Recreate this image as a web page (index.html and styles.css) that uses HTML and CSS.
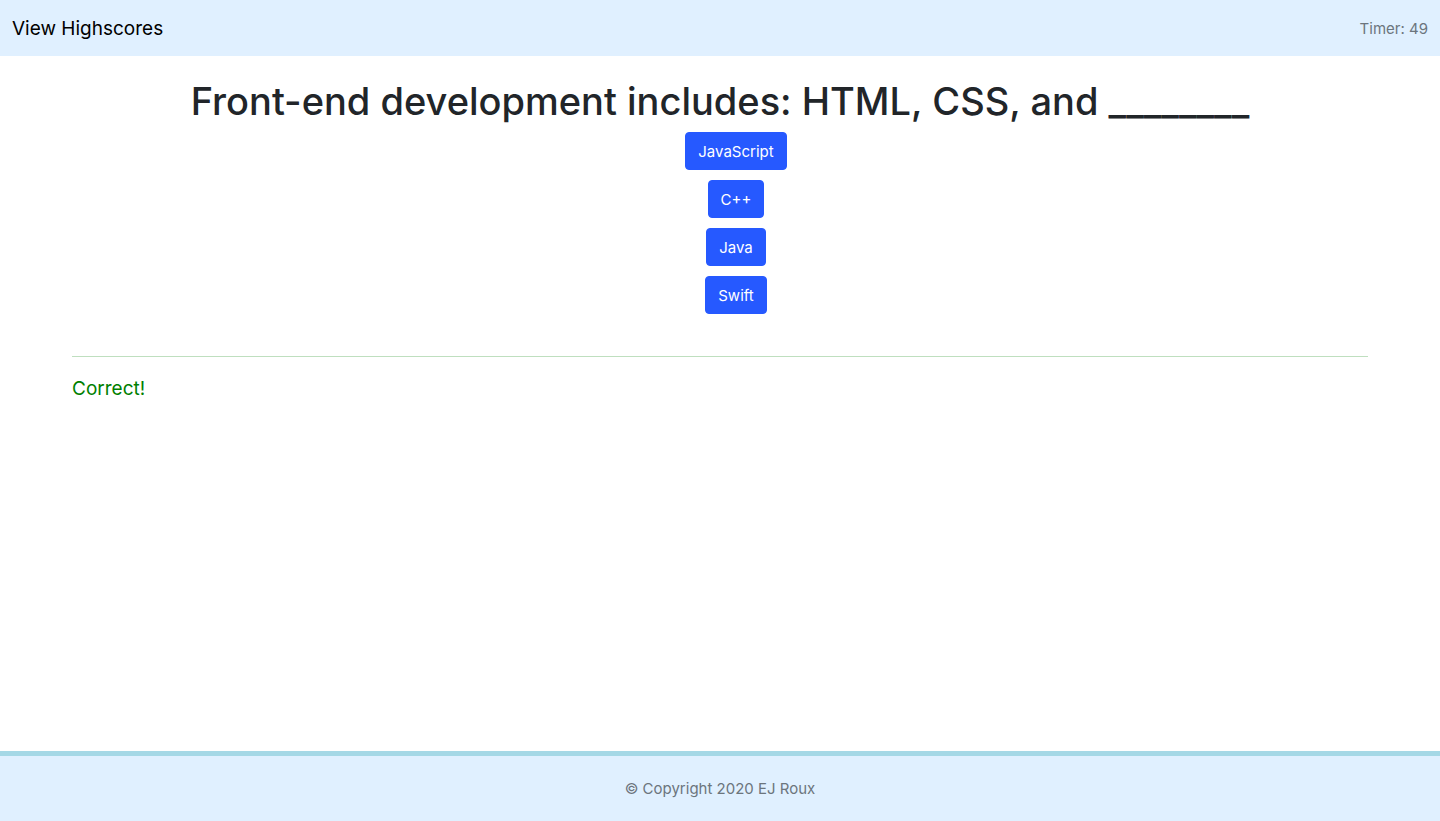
FILE: index.html
```html
<!DOCTYPE html>
<html lang="en">
<head>
<meta charset="utf-8">
<meta name="viewport" content="width=device-width, initial-scale=1">
<title>Coding Quiz</title>
<link rel="stylesheet" href="styles.css">
</head>
<body>
<header class="navbar">
  <a class="brand" href="#highscores">View Highscores</a>
  <span class="timer">Timer: 49</span>
</header>
<main class="quiz">
  <h1 class="question">Front-end development includes: HTML, CSS, and ________</h1>
  <ul class="answers">
    <li><button class="answer" type="button">JavaScript</button></li>
    <li><button class="answer" type="button">C++</button></li>
    <li><button class="answer" type="button">Java</button></li>
    <li><button class="answer" type="button">Swift</button></li>
  </ul>
  <p class="result">Correct!</p>
</main>
<footer class="footer">© Copyright 2020 EJ Roux</footer>
</body>
</html>
```
FILE: styles.css
```css
* {
  box-sizing: border-box;
}

body {
  display: flex;
  flex-direction: column;
  min-height: 100vh;
  margin: 0;
  background: #fff;
  color: #212529;
  font: 400 16px/24px Inter, "Liberation Sans", sans-serif;
}

.navbar {
  display: flex;
  align-items: center;
  justify-content: space-between;
  min-height: 56px;
  padding: 9px 12px 7px;
  background: #e0f0ff;
}

.brand {
  color: #000;
  font-size: 19px;
  line-height: 30px;
  text-decoration: none;
}

.timer,
.footer {
  color: #6c757d;
  font-size: 15px;
}

.quiz {
  flex: 1;
  padding: 20px 5%;
}

.question {
  margin: 0 0 6px;
  font-size: 38px;
  font-weight: 500;
  line-height: 50px;
  text-align: center;
}

.answers {
  display: flex;
  flex-direction: column;
  align-items: center;
  gap: 10px;
  margin: 0;
  padding: 0 0 0 32px;
  list-style: none;
}

.answer {
  display: block;
  padding: 7px 12px 5px;
  border: 1px solid #2659ff;
  border-radius: 4px;
  background: #2659ff;
  color: #fff;
  font: inherit;
  font-size: 15px;
  line-height: 24px;
}

.result {
  margin: 42px 0 0;
  padding-top: 16px;
  border-top: 1px solid #bfdfbf;
  color: #008000;
  font-size: 19px;
  line-height: 32px;
}

.footer {
  padding: 20px;
  border-top: 5px solid #a5d8e6;
  background: #e0f0ff;
  line-height: 25px;
  text-align: center;
}
```
